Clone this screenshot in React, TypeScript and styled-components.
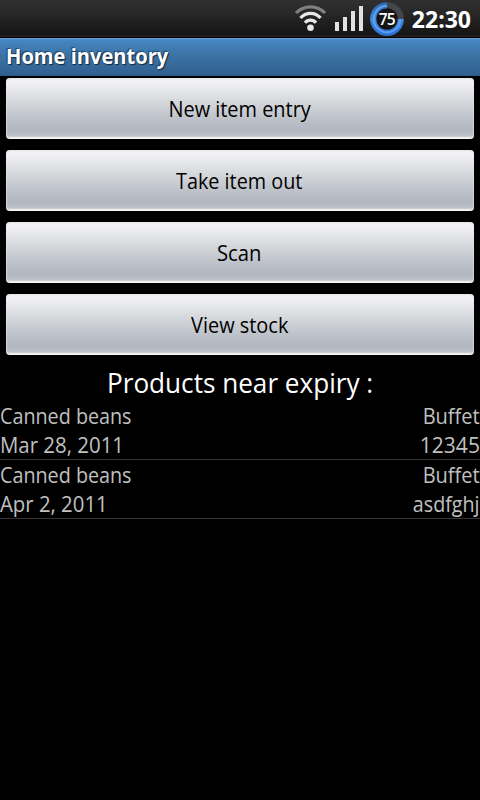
import React from "react";
import styled, { createGlobalStyle } from "styled-components";

const GlobalStyle = createGlobalStyle`
  html, body, #root { height: 100%; }
  body {
    margin: 0;
    background: #000;
    overflow: hidden;
    font-family: "Open Sans", "Noto Sans", sans-serif;
  }
`;

const Screen = styled.div`
  display: flex;
  flex-direction: column;
  width: 480px;
  height: 800px;
  background: #000;
`;

const StatusBar = styled.header`
  display: flex;
  align-items: center;
  justify-content: flex-end;
  box-sizing: border-box;
  height: 38px;
  padding-right: 9px;
  background: linear-gradient(#303030 0, #272727 14px, #151515 35px, #2b211f 36px, #1d1414 37px, #000 37px);
`;

const StatusIcon = styled.svg<{ $gap: number }>`
  flex: none;
  display: block;
  margin-right: ${(p) => p.$gap}px;
`;

const Clock = styled.time`
  font-size: 23px;
  font-weight: 700;
  line-height: 38px;
  color: #fff;
`;

/* Text narrowed horizontally around one of its edges or its centre. */
const Narrow = styled.span<{ $scale: number; $origin?: string }>`
  display: inline-block;
  transform: scaleX(${(p) => p.$scale});
  transform-origin: ${(p) => p.$origin ?? "center"};
`;

const TitleBar = styled.div`
  box-sizing: border-box;
  height: 38px;
  padding: 0 6px 2px;
  background: linear-gradient(#6ba1d4 0, #4687c4 2px, #427fb8 7px, #3b71a2 19px, #306090 37px, #2a5583 38px);
`;

const Title = styled.h1`
  margin: 0;
  font-size: 21px;
  font-weight: 700;
  line-height: 36px;
  color: #fff;
  text-shadow: 1px 1px 1px #10263c, -1px -1px 1px #20456a;
`;

const Actions = styled.nav`
  display: flex;
  flex-direction: column;
  gap: 11px;
  padding: 2px 6px 10px;
`;

const ActionButton = styled.button`
  height: 61px;
  padding: 0 1px 1px 0;
  border: 0;
  border-radius: 4px;
  background: linear-gradient(#e9e9ec 0, #f3f3f6 3px, #e4e6e9 13px, #cfd2d6 28px, #bcc0c8 42px, #b2b6c0 53px, #bfc2c9 58px, #f4f5f6 60px, #fff 61px);
  box-shadow: inset 1px 0 1px rgba(235, 236, 240, 0.55), inset -1px 0 1px rgba(235, 236, 240, 0.55);
  color: #000;
  font-family: inherit;
  font-size: 22px;
  line-height: 60px;
`;

const SectionTitle = styled.h2`
  margin: 0;
  font-size: 27.5px;
  font-weight: 400;
  line-height: 36px;
  text-align: center;
  color: #fff;
`;

const ProductList = styled.ul`
  margin: 0;
  padding: 0;
  list-style: none;
`;

const Product = styled.li`
  border-bottom: 1px solid #353535;
`;

const Line = styled.div`
  display: flex;
  justify-content: space-between;
  height: 29px;
  font-size: 22px;
  line-height: 28px;
  color: #c0c0c0;
`;

type Field = { text: string; scale: number };

const actions: Field[] = [
  { text: "New item entry", scale: 0.905 },
  { text: "Take item out", scale: 0.9 },
  { text: "Scan", scale: 0.92 },
  { text: "View stock", scale: 0.905 },
];

const products: [Field, Field][][] = [
  [
    [{ text: "Canned beans", scale: 0.897 }, { text: "Buffet", scale: 0.91 }],
    [{ text: "Mar 28, 2011", scale: 0.928 }, { text: "12345", scale: 0.955 }],
  ],
  [
    [{ text: "Canned beans", scale: 0.897 }, { text: "Buffet", scale: 0.91 }],
    [{ text: "Apr 2, 2011", scale: 0.925 }, { text: "asdfghj", scale: 0.895 }],
  ],
];

const WifiIcon = () => (
  <StatusIcon $gap={7} width="34" height="30" viewBox="0 0 34 30" fill="none">
    <path d="M2 9C10 .8 23 .8 31 9" stroke="#808080" strokeWidth="3.200" />
    <path d="M6.500 14C12 7.800 21 7.800 26.500 14" stroke="#e8e8e8" strokeWidth="3.300" />
    <path d="M11 18.800C14 15.300 19 15.300 22 18.800" stroke="#e8e8e8" strokeWidth="3.300" />
    <circle cx="16.500" cy="23.800" r="3.300" fill="#e8e8e8" />
  </StatusIcon>
);

const SignalIcon = () => (
  <StatusIcon $gap={6} width="29" height="26" viewBox="0 0 29 26" fill="#e2e2e2">
    <rect x="0" y="16" width="4" height="9" />
    <rect x="8" y="11" width="4" height="14" />
    <rect x="16" y="5" width="4" height="20" />
    <rect x="24" y="0" width="4" height="25" />
  </StatusIcon>
);

const BatteryIcon = () => (
  <StatusIcon $gap={8} width="34" height="36" viewBox="0 0 34 36">
    <defs>
      <linearGradient id="charge" x1="0" y1="0" x2="0" y2="1">
        <stop offset="0" stopColor="#2c6cba" />
        <stop offset="0.5" stopColor="#3f8ae6" />
        <stop offset="1" stopColor="#2b74dc" />
      </linearGradient>
    </defs>
    <circle cx="17" cy="18" r="13.800" fill="#151515" stroke="#43474c" strokeWidth="6" />
    <path d="M17 4.200A13.800 13.800 0 1 0 30.800 18" fill="none" stroke="url(#charge)" strokeWidth="6" />
    <path d="M17 4.700A13.300 13.300 0 1 0 30.300 18" fill="none" stroke="#6ba8f2" strokeWidth="2" opacity="0.8" />
    <text x="16.700" y="24" textAnchor="middle" fontFamily="Open Sans, sans-serif" fontSize="15.500" fontWeight="600" letterSpacing="-0.800" fill="#fff">
      75
    </text>
  </StatusIcon>
);

export default function App() {
  return (
    <Screen>
      <GlobalStyle />
      <StatusBar>
        <WifiIcon />
        <SignalIcon />
        <BatteryIcon />
        <Clock>22:30</Clock>
      </StatusBar>
      <TitleBar>
        <Title>
          <Narrow $scale={0.957} $origin="left">Home inventory</Narrow>
        </Title>
      </TitleBar>
      <Actions>
        {actions.map((a) => (
          <ActionButton key={a.text}>
            <Narrow $scale={a.scale}>{a.text}</Narrow>
          </ActionButton>
        ))}
      </Actions>
      <SectionTitle>
        <Narrow $scale={0.95}>Products near expiry :</Narrow>
      </SectionTitle>
      <ProductList>
        {products.map((lines, i) => (
          <Product key={i}>
            {lines.map(([left, right]) => (
              <Line key={left.text}>
                <Narrow $scale={left.scale} $origin="left">{left.text}</Narrow>
                <Narrow $scale={right.scale} $origin="right">{right.text}</Narrow>
              </Line>
            ))}
          </Product>
        ))}
      </ProductList>
    </Screen>
  );
}
